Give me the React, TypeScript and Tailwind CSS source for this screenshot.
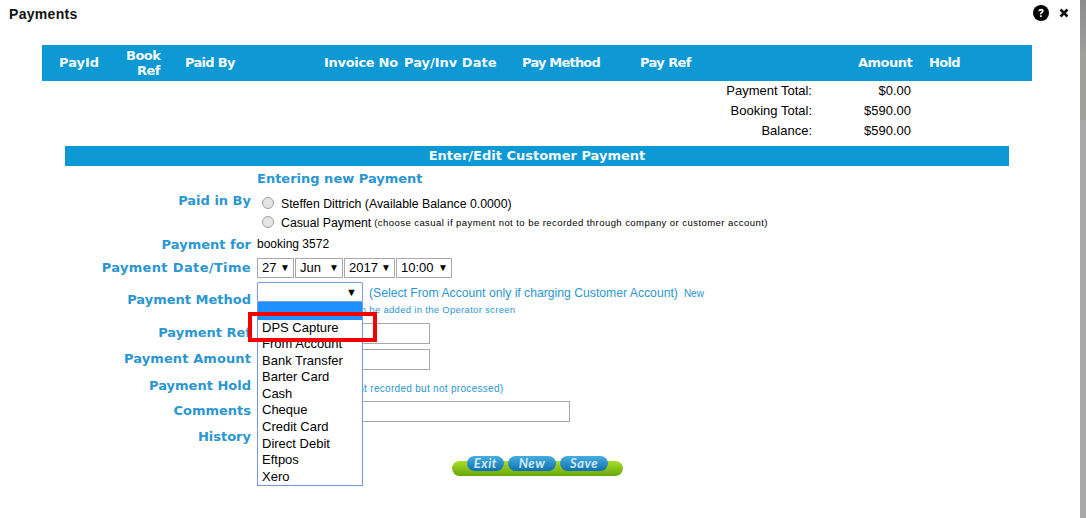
const labelClass = "font-['DejaVu_Sans'] text-[13px] font-bold text-[#2b96d2] text-right"

function FakeSelect({ value, width }: { value: string; width: string }) {
  return (
    <div className={`flex h-[20px] items-center justify-between border border-[#a9a9a9] bg-white pl-[4px] pr-[3px] text-[13px] ${width}`}>
      <span>{value}</span>
      <span className="text-[10px] leading-none">▼</span>
    </div>
  )
}

function Row({ label, top, labelExtra = '', children }: { label: string; top: string; labelExtra?: string; children?: React.ReactNode }) {
  return (
    <div className={`flex ${top}`}>
      <div className={`w-[251px] shrink-0 ${labelClass} ${labelExtra}`}>{label}</div>
      <div className="ml-[6px] flex-1">{children}</div>
    </div>
  )
}

const methods = ['From Account', 'Bank Transfer', 'Barter Card', 'Cash', 'Cheque', 'Credit Card', 'Direct Debit', 'Eftpos', 'Xero']

export default function App() {
  return (
    <div className="relative h-[518px] w-[1086px] overflow-hidden bg-white font-['Liberation_Sans',sans-serif] text-[12px] text-black">
      {/* title */}
      <div className="flex h-[45px] items-start justify-between pl-[9px] pr-[17px] pt-[5px]">
        <div className="mt-[1px] text-[14px] font-bold leading-[16px] tracking-[0.3px] text-[#111]">Payments</div>
        <div className="flex items-center gap-[10px]">
          <svg width="16" height="16" viewBox="0 0 16 16"><circle cx="8" cy="8" r="8" fill="#000" /><path d="M5.4 6.2c0-1.5 1.1-2.4 2.7-2.4s2.6.9 2.6 2.2c0 1-.6 1.5-1.3 2-.6.4-.8.6-.8 1.2H7c0-1.1.4-1.6 1.1-2.1.5-.4.8-.6.8-1s-.3-.7-.8-.7-.9.3-.9.8zM7 10.2h1.7V12H7z" fill="#fff" /></svg>
          <svg width="10" height="10" viewBox="0 0 10 10"><path d="M1.5 1.5l7 7M8.5 1.5l-7 7" stroke="#111" strokeWidth="2.6" /></svg>
        </div>
      </div>

      {/* payments table */}
      <div className="mx-[42px] flex h-[36px] w-[990px] items-center bg-[#0e98d4] font-['DejaVu_Sans'] text-[13px] font-bold text-[#f2f9fd]">
        <div className="ml-[17px] w-[67px]">PayId</div>
        <div className="w-[34px] text-right leading-[15px] tracking-[-0.5px]">Book<br />Ref</div>
        <div className="ml-[25px] w-[139px] tracking-[-0.7px]">Paid By</div>
        <div className="w-[80px] tracking-[-0.3px]">Invoice No</div>
        <div className="w-[118px]">Pay/Inv Date</div>
        <div className="w-[118px] tracking-[-0.8px]">Pay Method</div>
        <div className="w-[218px] tracking-[-0.6px]">Pay Ref</div>
        <div className="w-[71px] tracking-[-0.5px]">Amount</div>
        <div className="tracking-[-0.7px]">Hold</div>
      </div>

      {/* totals */}
      <div className="flex flex-col text-[13px] leading-[20px]">
        {[['Payment Total:', '$0.00'], ['Booking Total:', '$590.00'], ['Balance:', '$590.00']].map(([name, amount]) => (
          <div key={name} className="flex">
            <div className="w-[812px] text-right">{name}</div>
            <div className="w-[99px] text-right">{amount}</div>
          </div>
        ))}
      </div>

      {/* form header */}
      <div className="mx-[65px] mt-[5px] h-[20px] w-[944px] bg-[#0e98d4] text-center font-['DejaVu_Sans'] text-[13px] font-bold leading-[20px] text-[#f2f9fd]">
        Enter/Edit Customer Payment
      </div>

      <div className="ml-[257px] mt-[4px] font-['DejaVu_Sans'] text-[13px] font-bold leading-[17px] text-[#2b96d2]">Entering new Payment</div>

      <Row label="Paid in By" top="mt-[4px]">
        <div className="pt-[2px] text-[12.3px]">
          <div className="flex h-[19px] items-center pl-[5px]">
            <span className="h-[12px] w-[12px] rounded-full border border-[#a0a0a0] bg-[#e4e4e4]" />
            <span className="ml-[7px] mt-[4px]">Steffen Dittrich (Available Balance 0.0000)</span>
          </div>
          <div className="flex h-[19px] items-center pl-[5px]">
            <span className="h-[12px] w-[12px] rounded-full border border-[#a0a0a0] bg-[#e4e4e4]" />
            <span className="ml-[7px] mt-[4px]">Casual Payment</span>
            <span className="ml-[3px] mt-[4px] text-[9.5px] tracking-[0.44px]">(choose casual if payment not to be recorded through company or customer account)</span>
          </div>
        </div>
      </Row>

      <Row label="Payment for" top="mt-[4px]">
        <div className="leading-[18px]">booking 3572</div>
      </Row>

      <Row label="Payment Date/Time" labelExtra="tracking-[0.35px]" top="mt-[3px]">
        <div className="flex gap-[1px]">
          <FakeSelect value="27" width="w-[37px]" />
          <FakeSelect value="Jun" width="w-[48px]" />
          <FakeSelect value="2017" width="w-[51px]" />
          <FakeSelect value="10:00" width="w-[56px]" />
        </div>
      </Row>

      <Row label="Payment Method" top="mt-[12px]">
        <div className="ml-[112px] mt-[-5px] text-[12.2px] leading-[16px] text-[#2b96d2]">
          (Select From Account only if charging Customer Account)
          <span className="ml-[6px] text-[10px]">New</span>
        </div>
        <div className="ml-[4px] mt-[2px] text-[9.5px] leading-[12px] tracking-[0.3px] text-[#2b96d2]">Additional methods can be added in the Operator screen</div>
      </Row>

      <Row label="Payment Ref" top="mt-[7px]">
        <div className="h-[21px] w-[173px] border border-[#a9a9a9]" />
      </Row>
      <Row label="Payment Amount" labelExtra="tracking-[0.1px]" top="mt-[5px]">
        <div className="h-[21px] w-[173px] border border-[#a9a9a9]" />
      </Row>
      <Row label="Payment Hold" top="mt-[6px]">
        <div className="ml-[65px] mt-[7px] text-[10px] leading-[12px] tracking-[0.3px] text-[#2b96d2]">(Payment recorded but not processed)</div>
      </Row>
      <Row label="Comments" top="mt-[6px]">
        <div className="h-[21px] w-[313px] border border-[#a9a9a9]" />
      </Row>
      <Row label="History" top="mt-[5px]" />

      {/* action buttons */}
      <div className="relative ml-[452px] mt-[14.5px] h-[15px] w-[171px] rounded-full bg-gradient-to-b from-[#a8de2a] to-[#68a606]">
        <div className="absolute left-[15px] top-[-5px] flex gap-[4px] font-['Lato'] text-[13px] font-bold italic tracking-[0.5px] text-[#cfeaf7]">
          <div className="flex h-[15px] w-[37px] items-center justify-center rounded-full bg-gradient-to-b from-[#45aee0] to-[#0e6fb0]">Exit</div>
          <div className="flex h-[15px] w-[48px] items-center justify-center rounded-full bg-gradient-to-b from-[#45aee0] to-[#0e6fb0]">New</div>
          <div className="flex h-[15px] w-[48px] items-center justify-center rounded-full bg-gradient-to-b from-[#45aee0] to-[#0e6fb0]">Save</div>
        </div>
      </div>

      {/* open dropdown over the form */}
      <div className="absolute left-[257px] top-[282px] w-[106px]">
        <div className="flex h-[20px] items-center justify-end rounded-[2px] border border-[#7f9fe0] bg-white pr-[5px] shadow-[0_0_1px_#7f9fe0]">
          <span className="text-[11px] leading-none text-black">▼</span>
        </div>
        <div className="border-x border-b border-[#7a96dc] bg-white text-[13px] leading-[16.6px]">
          <div className="h-[17.5px] bg-[#1e90ff]" />
          <div className="pl-[4px]">DPS Capture</div>
          {methods.map((m) => (
            <div key={m} className="pl-[4px]">{m}</div>
          ))}
        </div>
      </div>

      {/* annotation */}
      <div className="absolute left-[248px] top-[312px] h-[30px] w-[129px] border-[4px] border-[#f50000]" />

      {/* edge of the window behind */}
      <div className="absolute right-0 top-0 flex h-full w-[6px] flex-col bg-[#a9a9a9]">
        <div className="h-[50px] bg-gradient-to-b from-[#8c8c8c] to-[#9c9c9c]" />
        <div className="h-[70px] bg-[#a0a098]" />
      </div>
    </div>
  )
}
